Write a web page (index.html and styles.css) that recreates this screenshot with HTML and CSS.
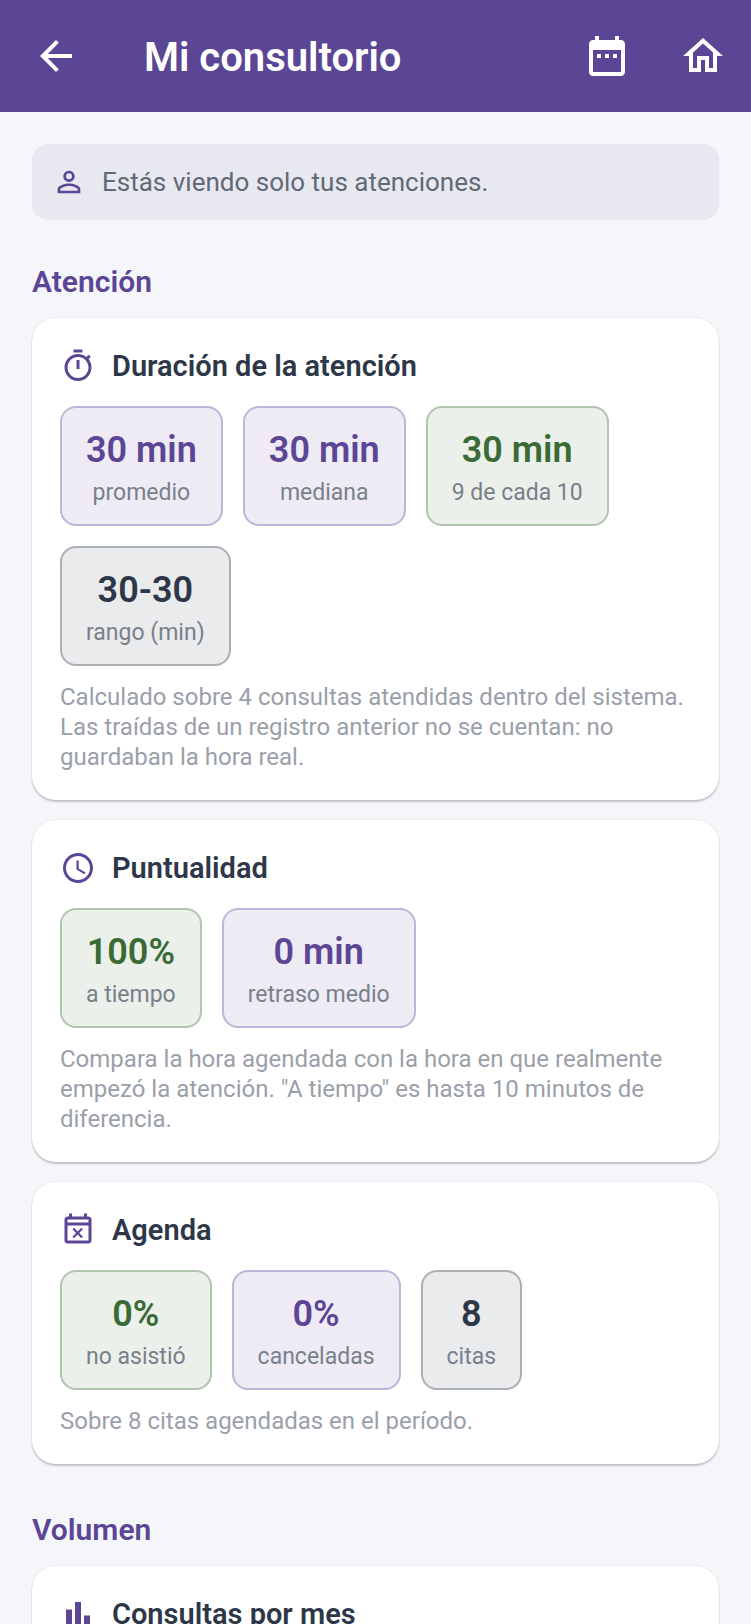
FILE: index.html
```html
<!DOCTYPE html>
<html lang="es">
<head>
<meta charset="UTF-8">
<meta name="viewport" content="width=device-width, initial-scale=1.0">
<title>Mi consultorio</title>
<link rel="stylesheet" href="styles.css">
</head>
<body>
<header class="appbar">
  <button class="icon-btn back" type="button" aria-label="Volver">
    <svg viewBox="0 0 24 24"><path d="M20 11H7.83l5.59-5.59L12 4l-8 8 8 8 1.41-1.41L7.83 13H20v-2z"/></svg>
  </button>
  <h1>Mi consultorio</h1>
  <button class="icon-btn" type="button" aria-label="Período">
    <svg viewBox="0 0 24 24"><path d="M9 11H7v2h2v-2zm4 0h-2v2h2v-2zm4 0h-2v2h2v-2zm2-7h-1V2h-2v2H8V2H6v2H5c-1.11 0-1.99.9-1.99 2L3 20c0 1.1.89 2 2 2h14c1.1 0 2-.9 2-2V6c0-1.1-.9-2-2-2zm0 16H5V9h14v11z"/></svg>
  </button>
  <button class="icon-btn" type="button" aria-label="Inicio">
    <svg viewBox="0 0 24 24"><path d="M12 5.69l5 4.5V18h-2v-6H9v6H7v-7.81l5-4.5M12 3L2 12h3v8h6v-6h2v6h6v-8h3L12 3z"/></svg>
  </button>
</header>

<main class="content">
  <div class="notice">
    <svg viewBox="0 0 24 24"><path d="M12 5.9a2.1 2.1 0 1 1 0 4.2 2.1 2.1 0 0 1 0-4.2m0 9c2.97 0 6.1 1.46 6.1 2.1v1.1H5.9V17c0-.64 3.13-2.1 6.1-2.1M12 4C9.79 4 8 5.79 8 8s1.79 4 4 4 4-1.79 4-4-1.79-4-4-4zm0 9c-2.67 0-8 1.34-8 4v3h16v-3c0-2.66-5.33-4-8-4z"/></svg>
    <span>Estás viendo solo tus atenciones.</span>
  </div>

  <section class="group">
    <h2>Atención</h2>

    <article class="card">
      <div class="card-head">
        <svg viewBox="0 0 24 24"><path d="M15 1H9v2h6V1zm-4 13h2V8h-2v6zm8.03-6.61l1.42-1.42c-.43-.51-.9-.99-1.41-1.41l-1.42 1.42C16.07 4.74 14.12 4 12 4c-4.97 0-9 4.03-9 9s4.02 9 9 9 9-4.03 9-9c0-2.12-.74-4.07-1.97-5.61zM12 20c-3.87 0-7-3.13-7-7s3.13-7 7-7 7 3.13 7 7-3.13 7-7 7z"/></svg>
        <h3>Duración de la atención</h3>
      </div>
      <div class="stats">
        <div class="stat purple"><strong>30 min</strong><span>promedio</span></div>
        <div class="stat purple"><strong>30 min</strong><span>mediana</span></div>
        <div class="stat green"><strong>30 min</strong><span>9 de cada 10</span></div>
        <div class="stat gray"><strong>30-30</strong><span>rango (min)</span></div>
      </div>
      <p class="note">Calculado sobre 4 consultas atendidas dentro del sistema. Las traídas de un registro anterior no se cuentan: no guardaban la hora real.</p>
    </article>

    <article class="card">
      <div class="card-head">
        <svg viewBox="0 0 24 24"><path d="M11.99 2C6.47 2 2 6.48 2 12s4.47 10 9.99 10C17.52 22 22 17.52 22 12S17.52 2 11.99 2zM12 20c-4.42 0-8-3.58-8-8s3.58-8 8-8 8 3.58 8 8-3.58 8-8 8zm.5-13H11v6l5.25 3.15.75-1.23-4.5-2.67z"/></svg>
        <h3>Puntualidad</h3>
      </div>
      <div class="stats">
        <div class="stat green"><strong>100%</strong><span>a tiempo</span></div>
        <div class="stat purple"><strong>0 min</strong><span>retraso medio</span></div>
      </div>
      <p class="note">Compara la hora agendada con la hora en que realmente empezó la atención. "A tiempo" es hasta 10 minutos de diferencia.</p>
    </article>

    <article class="card">
      <div class="card-head">
        <svg viewBox="0 0 24 24"><path d="M19 3h-1V1h-2v2H8V1H6v2H5c-1.11 0-1.99.9-1.99 2L3 19c0 1.1.89 2 2 2h14c1.1 0 2-.9 2-2V5c0-1.1-.9-2-2-2zm0 16H5V9h14v10zM5 7V5h14v2H5z"/><path d="M9.31 17.5l2.44-2.44 2.44 2.44 1.06-1.06L12.81 14l2.44-2.44-1.06-1.06-2.44 2.44-2.44-2.44-1.06 1.06L10.69 14l-2.44 2.44z"/></svg>
        <h3>Agenda</h3>
      </div>
      <div class="stats">
        <div class="stat green"><strong>0%</strong><span>no asistió</span></div>
        <div class="stat purple"><strong>0%</strong><span>canceladas</span></div>
        <div class="stat gray"><strong>8</strong><span>citas</span></div>
      </div>
      <p class="note">Sobre 8 citas agendadas en el período.</p>
    </article>
  </section>

  <section class="group">
    <h2>Volumen</h2>

    <article class="card">
      <div class="card-head">
        <svg viewBox="0 0 24 24"><path d="M4 9h4v11H4zm12 4h4v7h-4zm-6-9h4v16h-4z"/></svg>
        <h3>Consultas por mes</h3>
      </div>
    </article>
  </section>
</main>
</body>
</html>
```

FILE: styles.css
```css
:root {
  --primary: #5b4595;
  --green: #3a6b35;
  --text: #2d3748;
  --background: #f5f6fa;
  --card-bg: #ffffff;
  --radius: 16px;
}
* { box-sizing: border-box; }
body {
  background: var(--background); color: var(--text); font-family: Roboto, sans-serif; margin: 0;
  height: 100vh; display: flex; flex-direction: column;
}
h1, h2, h3, p { margin: 0; }
h1, h2, h3, strong { font-weight: 600; }
svg { display: block; fill: currentColor; flex: none; }

.appbar { background: var(--primary); color: #fff; display: flex; align-items: center; height: 112px; flex: none; }
.appbar h1 { flex: 1; margin-left: 32px; padding-top: 4px; font-size: 40px; line-height: 48px; }
.icon-btn {
  display: flex; align-items: center; justify-content: center; width: 96px; height: 96px;
  padding: 0; border: none; background: none; color: inherit; cursor: pointer;
}
.icon-btn.back { width: 112px; }
.icon-btn svg { width: 48px; height: 48px; }

.content { flex: 1; min-height: 0; overflow-y: auto; padding: 32px; scrollbar-width: none; }
.notice {
  display: flex; align-items: center; gap: 16px; min-height: 76px; padding: 20px;
  background: #e8e8f0; border-radius: var(--radius); color: #616876; font-size: 26px; line-height: 36px;
}
.notice svg { width: 34px; height: 34px; color: var(--primary); }

.group { margin-top: 44px; }
.group + .group { margin-top: 48px; }
.group h2 { color: var(--primary); font-size: 30px; line-height: 36px; margin-bottom: 18px; }

.card {
  background: var(--card-bg); border-radius: 24px; padding: 28px;
  box-shadow: 0 2px 2px rgba(0,0,0,.2), 0 0 2px rgba(0,0,0,.1);
}
.card + .card { margin-top: 20px; }
.card-head { display: flex; align-items: center; gap: 16px; min-height: 40px; }
.card-head svg { width: 36px; height: 36px; color: var(--primary); }
.card-head h3 { font-size: 29px; line-height: 36px; }

.stats { display: flex; flex-wrap: wrap; gap: 20px; margin-top: 20px; }
.stat {
  display: flex; flex-direction: column; align-items: center; gap: 6px;
  padding: 20px 24px 16px; border: 2px solid; border-radius: var(--radius);
}
.stat strong { font-size: 36px; line-height: 44px; }
.stat span { font-size: 23px; line-height: 30px; color: #79808c; }
.purple { background: #eeebf5; border-color: #bdb5d7; color: var(--primary); }
.green { background: #ebf0ea; border-color: #b0c4ae; color: var(--green); }
.gray { background: #e9ebec; border-color: #abafb6; color: var(--text); }

.note { margin-top: 16px; font-size: 24px; line-height: 30px; color: #9a9fa9; }
```
